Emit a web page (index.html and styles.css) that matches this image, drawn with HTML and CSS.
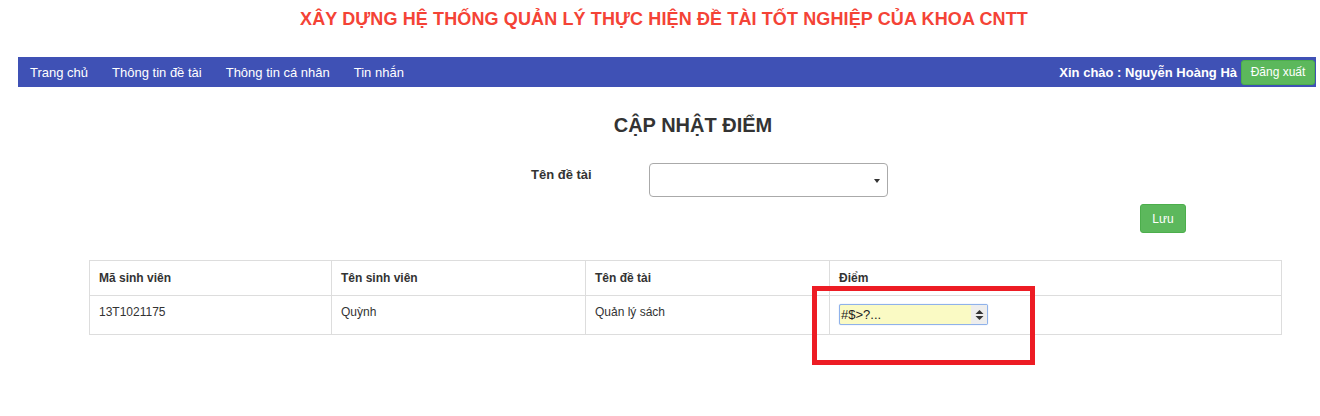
FILE: index.html
```html
<!DOCTYPE html>
<html lang="vi">
<head>
<meta charset="utf-8">
<title>Cập nhật điểm</title>
<link rel="stylesheet" href="styles.css">
</head>
<body>
<header class="site-header">
  <h1 class="site-title">XÂY DỰNG HỆ THỐNG QUẢN LÝ THỰC HIỆN ĐỀ TÀI TỐT NGHIỆP CỦA KHOA CNTT</h1>
</header>
<nav class="navbar">
  <ul class="nav-links">
    <li><a href="#">Trang chủ</a></li>
    <li><a href="#">Thông tin đề tài</a></li>
    <li><a href="#">Thông tin cá nhân</a></li>
    <li><a href="#">Tin nhắn</a></li>
  </ul>
  <div class="nav-user">
    <span class="greeting">Xin chào : Nguyễn Hoàng Hà</span>
    <button class="btn btn-green btn-logout">Đăng xuất</button>
  </div>
</nav>
<main class="content">
  <h2 class="page-title">CẬP NHẬT ĐIỂM</h2>
  <div class="form-row">
    <label class="form-label">Tên đề tài</label>
    <div class="select-box"><span class="caret"></span></div>
  </div>
  <div class="actions">
    <button class="btn btn-green btn-save">Lưu</button>
  </div>
  <div class="table-wrap">
    <table class="score-table">
      <colgroup>
        <col class="c1"><col class="c2"><col class="c3"><col class="c4">
      </colgroup>
      <thead>
        <tr><th>Mã sinh viên</th><th>Tên sinh viên</th><th>Tên đề tài</th><th>Điểm</th></tr>
      </thead>
      <tbody>
        <tr>
          <td>13T1021175</td>
          <td>Quỳnh</td>
          <td>Quản lý sách</td>
          <td class="score-cell">
            <div class="score-input">
              <span class="score-value">#$&gt;?...</span>
              <span class="spinner">
                <svg width="9" height="12" viewBox="0 0 9 12"><path d="M4.5 1 L8.5 5 L0.5 5 Z" fill="#333"/><path d="M0.5 7 L8.5 7 L4.5 11 Z" fill="#333"/></svg>
              </span>
            </div>
          </td>
        </tr>
      </tbody>
    </table>
    <div class="highlight-box"></div>
  </div>
</main>
</body>
</html>
```
FILE: styles.css
```css
* { box-sizing: border-box; }
html, body { min-height: 416px; }
body {
  margin: 0;
  font-family: "Liberation Sans", Arial, sans-serif;
  color: #333;
  background: #fff;
}
.site-header {
  height: 57px;
  padding-top: 9px;
}
.site-title {
  margin: 0;
  text-align: center;
  font-size: 18px;
  line-height: 20px;
  font-weight: bold;
  color: #f44336;
  padding-left: 8px;
  letter-spacing: 0.12px;
}
.navbar {
  margin: 0 4px 0 18px;
  height: 30px;
  background: #3f51b5;
  display: flex;
  align-items: center;
  justify-content: space-between;
}
.nav-links {
  list-style: none;
  margin: 0;
  padding: 0 0 0 12px;
  display: flex;
  gap: 24px;
}
.nav-links a {
  color: #fff;
  text-decoration: none;
  font-size: 13px;
}
.nav-user {
  display: flex;
  align-items: center;
  gap: 4px;
  padding-right: 1px;
}
.greeting {
  color: #fff;
  font-weight: bold;
  font-size: 13px;
}
.btn {
  border: 1px solid #4cae4c;
  border-radius: 3px;
  font-family: inherit;
  color: #fff;
  cursor: pointer;
}
.btn-green { background: #5cb85c; }
.btn-logout {
  height: 25px;
  width: 74px;
  font-size: 12px;
  padding: 0;
}
.content {
  padding: 0 39px 80px 89px;
}
.page-title {
  margin: 27px 0 0;
  font-size: 20px;
  line-height: 22px;
  font-weight: bold;
  text-align: center;
  color: #333;
  padding-left: 16px;
}
.form-row {
  margin-top: 27px;
  display: flex;
  padding-left: 442px;
}
.form-label {
  width: 118px;
  font-size: 13px;
  font-weight: bold;
  line-height: 18px;
  padding-top: 3px;
}
.select-box {
  width: 239px;
  height: 34px;
  border: 1px solid #aaa;
  border-radius: 4px;
  position: relative;
  background: #fff;
}
.caret {
  position: absolute;
  right: 7px;
  top: 15px;
  width: 0;
  height: 0;
  border-left: 3px solid transparent;
  border-right: 3px solid transparent;
  border-top: 4px solid #333;
}
.actions {
  display: flex;
  justify-content: flex-end;
  margin-top: 7px;
  padding-right: 95px;
}
.btn-save {
  width: 46px;
  height: 29px;
  font-size: 12px;
  padding: 0;
}
.table-wrap {
  position: relative;
  margin-top: 27px;
  width: 1192px;
}
.score-table {
  width: 1192px;
  border-collapse: collapse;
  table-layout: fixed;
  font-size: 12px;
}
.c1 { width: 242px; }
.c2 { width: 254px; }
.c3 { width: 244px; }
.c4 { width: 452px; }
.score-table th,
.score-table td {
  border: 1px solid #ddd;
  text-align: left;
  vertical-align: top;
  padding: 0 9px;
  line-height: 14px;
}
.score-table th {
  height: 35px;
  font-weight: bold;
  padding-top: 10px;
}
.score-table td {
  height: 39px;
  padding-top: 9px;
}
.score-table td.score-cell {
  padding-top: 8px;
}
.score-input {
  width: 149px;
  height: 21px;
  border: 1px solid #8fb2ea;
  border-radius: 2px;
  background: #fafac4;
  display: flex;
  align-items: center;
  box-shadow: 0 0 1px #9ab8ee;
}
.score-value {
  flex: 1;
  font-size: 13px;
  color: #222;
  padding-left: 1px;
}
.spinner {
  width: 16px;
  height: 19px;
  background: #ededed;
  display: flex;
  align-items: center;
  justify-content: center;
}
.highlight-box {
  position: absolute;
  left: 723px;
  top: 26px;
  width: 223px;
  height: 79px;
  border: 5px solid #ed1c24;
  pointer-events: none;
}
```
